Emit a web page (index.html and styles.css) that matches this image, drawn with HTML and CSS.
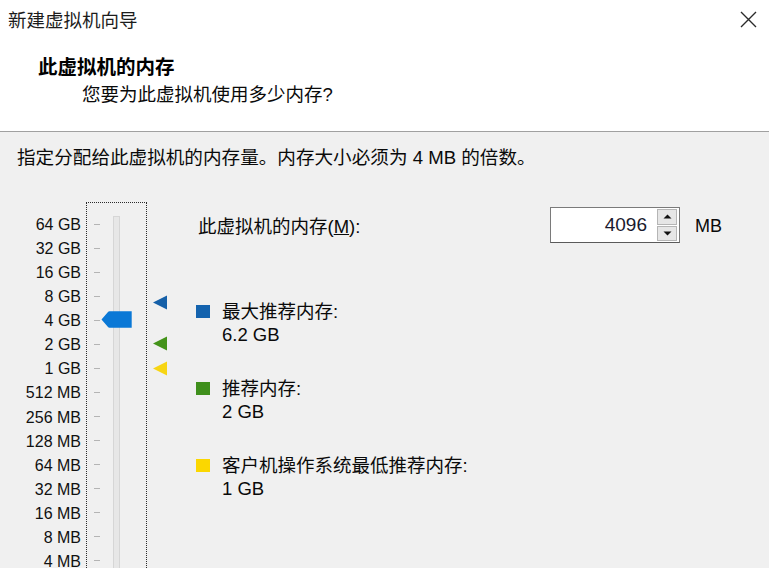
FILE: index.html
```html
<!DOCTYPE html>
<html lang="zh-CN">
<head>
<meta charset="utf-8">
<title>新建虚拟机向导</title>
<link rel="stylesheet" href="styles.css">
</head>
<body>
<div class="window">
  <div class="header">
    <div class="titlebar">
      <span class="title">新建虚拟机向导</span>
      <svg class="close" width="17" height="17" viewBox="0 0 17 17"><path d="M1 1 L16 16 M16 1 L1 16" stroke="#2b2b2b" stroke-width="1.4" fill="none"/></svg>
    </div>
    <div class="heading">此虚拟机的内存</div>
    <div class="subheading">您要为此虚拟机使用多少内存?</div>
  </div>
  <div class="content">
    <p class="desc">指定分配给此虚拟机的内存量。内存大小必须为 4 MB 的倍数。</p>
    <div class="main">
      <div class="scale-labels">
        <div class="scale-label">64 GB</div>
        <div class="scale-label">32 GB</div>
        <div class="scale-label">16 GB</div>
        <div class="scale-label">8 GB</div>
        <div class="scale-label">4 GB</div>
        <div class="scale-label">2 GB</div>
        <div class="scale-label">1 GB</div>
        <div class="scale-label">512 MB</div>
        <div class="scale-label">256 MB</div>
        <div class="scale-label">128 MB</div>
        <div class="scale-label">64 MB</div>
        <div class="scale-label">32 MB</div>
        <div class="scale-label">16 MB</div>
        <div class="scale-label">8 MB</div>
        <div class="scale-label">4 MB</div>
      </div>
      <div class="slider">
        <div class="ticks">
          <span class="tick"></span><span class="tick"></span><span class="tick"></span>
          <span class="tick"></span><span class="tick"></span><span class="tick"></span>
          <span class="tick"></span><span class="tick"></span><span class="tick"></span>
          <span class="tick"></span><span class="tick"></span><span class="tick"></span>
          <span class="tick"></span><span class="tick"></span><span class="tick"></span>
        </div>
        <div class="track"></div>
        <svg class="thumb" style="top:108px" width="31" height="17" viewBox="0 0 31 17"><path d="M0.5 8.5 L7 1 Q7.5 0.3 8.5 0.3 L30.7 0.3 L30.7 16.7 L8.5 16.7 Q7.5 16.7 7 16 Z" fill="#0a78d6"/></svg>
      </div>
      <div class="markers">
        <svg class="marker" style="top:93px" width="15" height="15" viewBox="0 0 15 15"><path d="M0 7.5 L14 0.5 L14 14.5 Z" fill="#1560a8"/></svg>
        <svg class="marker" style="top:134px" width="15" height="15" viewBox="0 0 15 15"><path d="M0 7.5 L14 0.5 L14 14.5 Z" fill="#44931a"/></svg>
        <svg class="marker" style="top:159px" width="15" height="15" viewBox="0 0 15 15"><path d="M0 7.5 L14 0.5 L14 14.5 Z" fill="#f7d514"/></svg>
      </div>
      <div class="right">
        <div class="mem-row">
          <span class="mem-label">此虚拟机的内存(<u>M</u>):</span>
          <div class="spin">
            <span class="spin-value">4096</span>
            <div class="spin-buttons">
              <span class="spin-btn"><svg width="9" height="5" viewBox="0 0 9 5"><path d="M0.5 4.5 L4.5 0.5 L8.5 4.5 Z" fill="#111"/></svg></span>
              <span class="spin-btn"><svg width="9" height="5" viewBox="0 0 9 5"><path d="M0.5 0.5 L4.5 4.5 L8.5 0.5 Z" fill="#111"/></svg></span>
            </div>
          </div>
          <span class="unit">MB</span>
        </div>
        <div class="legend">
          <div class="legend-item">
            <span class="swatch swatch-blue"></span>
            <div class="legend-text"><div>最大推荐内存:</div><div>6.2 GB</div></div>
          </div>
          <div class="legend-item">
            <span class="swatch swatch-green"></span>
            <div class="legend-text"><div>推荐内存:</div><div>2 GB</div></div>
          </div>
          <div class="legend-item">
            <span class="swatch swatch-yellow"></span>
            <div class="legend-text"><div>客户机操作系统最低推荐内存:</div><div>1 GB</div></div>
          </div>
        </div>
      </div>
    </div>
  </div>
</div>
</body>
</html>
```

FILE: styles.css
```css
* { box-sizing: border-box; }
html, body {
  margin: 0;
  padding: 0;
}
body {
  font-family: "Liberation Sans", "Noto Sans CJK SC", sans-serif;
  color: #0a0a0a;
  background: #f0f0f0;
}
.window {
  width: 769px;
  height: 568px;
  overflow: hidden;
  display: flex;
  flex-direction: column;
}
.header {
  background: #ffffff;
  height: 132px;
  border-bottom: 1px solid #a0a0a0;
  flex: 0 0 auto;
}
.titlebar {
  height: 38px;
  display: flex;
  align-items: center;
  justify-content: space-between;
  padding: 0 12px 0 8px;
  font-size: 18.5px;
  color: #1c1c1c;
}
.close { display: block; }
.heading {
  margin-top: 17px;
  padding-left: 38px;
  font-size: 19.5px;
  font-weight: bold;
  line-height: 24px;
  color: #000;
}
.subheading {
  margin-top: 4px;
  padding-left: 82px;
  font-size: 18.5px;
  line-height: 24px;
}
.content {
  flex: 1 1 auto;
  background: #f0f0f0;
}
.desc {
  margin: 0;
  padding: 14px 0 0 17px;
  font-size: 18.6px;
  line-height: 24px;
}
.main {
  margin-top: 32px;
  display: flex;
  align-items: flex-start;
}
.scale-labels {
  width: 81px;
  padding-top: 11px;
  flex: 0 0 auto;
}
.scale-label {
  height: 24.07px;
  line-height: 24.07px;
  font-size: 16px;
  text-align: right;
  white-space: nowrap;
  color: #111;
}
.slider {
  position: relative;
  margin-left: 5px;
  width: 61px;
  height: 420px;
  border: 1px dotted #2a2a2a;
  display: flex;
  align-items: flex-start;
  padding-left: 7px;
  flex: 0 0 auto;
}
.ticks {
  width: 6px;
  padding-top: 9px;
  display: flex;
  flex-direction: column;
}
.tick {
  height: 24.07px;
  display: flex;
  align-items: center;
}
.tick::before {
  content: "";
  display: block;
  width: 6px;
  height: 1px;
  background: #b4b4b4;
}
.track {
  margin-left: 13px;
  margin-top: 13px;
  width: 7px;
  height: 400px;
  background: #e7e7e7;
  border: 1px solid #d6d6d6;
}
.thumb {
  position: absolute;
  left: 14px;
  display: block;
}
.markers {
  position: relative;
  width: 49px;
  height: 200px;
  flex: 0 0 auto;
}
.marker {
  position: absolute;
  left: 6px;
  display: block;
}
.right {
  flex: 1 1 auto;
  padding-top: 5px;
}
.mem-row {
  display: flex;
  align-items: center;
  height: 36px;
}
.mem-label {
  flex: 0 0 354px;
  padding-left: 2px;
  font-size: 18.5px;
}
.spin {
  width: 130px;
  height: 36px;
  display: flex;
  background: #ffffff;
  border: 1px solid #7a7a7a;
  border-bottom-color: #5a5a5a;
}
.spin-value {
  flex: 1 1 auto;
  text-align: right;
  padding-right: 9px;
  font-size: 19px;
  line-height: 33px;
  color: #1a1a2e;
}
.spin-buttons {
  width: 23px;
  display: flex;
  flex-direction: column;
  gap: 1px;
  padding: 1px 2px 1px 1px;
  background: #ffffff;
}
.spin-btn {
  flex: 1 1 0;
  display: flex;
  align-items: center;
  justify-content: center;
  background: #e6e6e6;
  border: 1px solid #b5b5b5;
}
.spin-btn svg { display: block; }
.unit {
  margin-left: 15px;
  font-size: 18px;
  padding-top: 2px;
}
.legend {
  margin-top: 57px;
  display: flex;
  flex-direction: column;
  gap: 31px;
}
.legend-item {
  display: flex;
  align-items: flex-start;
}
.swatch {
  flex: 0 0 auto;
  width: 14px;
  height: 13px;
  margin-top: 5px;
  margin-right: 12px;
}
.swatch-blue { background: #1463ae; }
.swatch-green { background: #3f8f1c; }
.swatch-yellow { background: #fbd700; }
.legend-text {
  font-size: 18.5px;
  line-height: 23px;
}
```
